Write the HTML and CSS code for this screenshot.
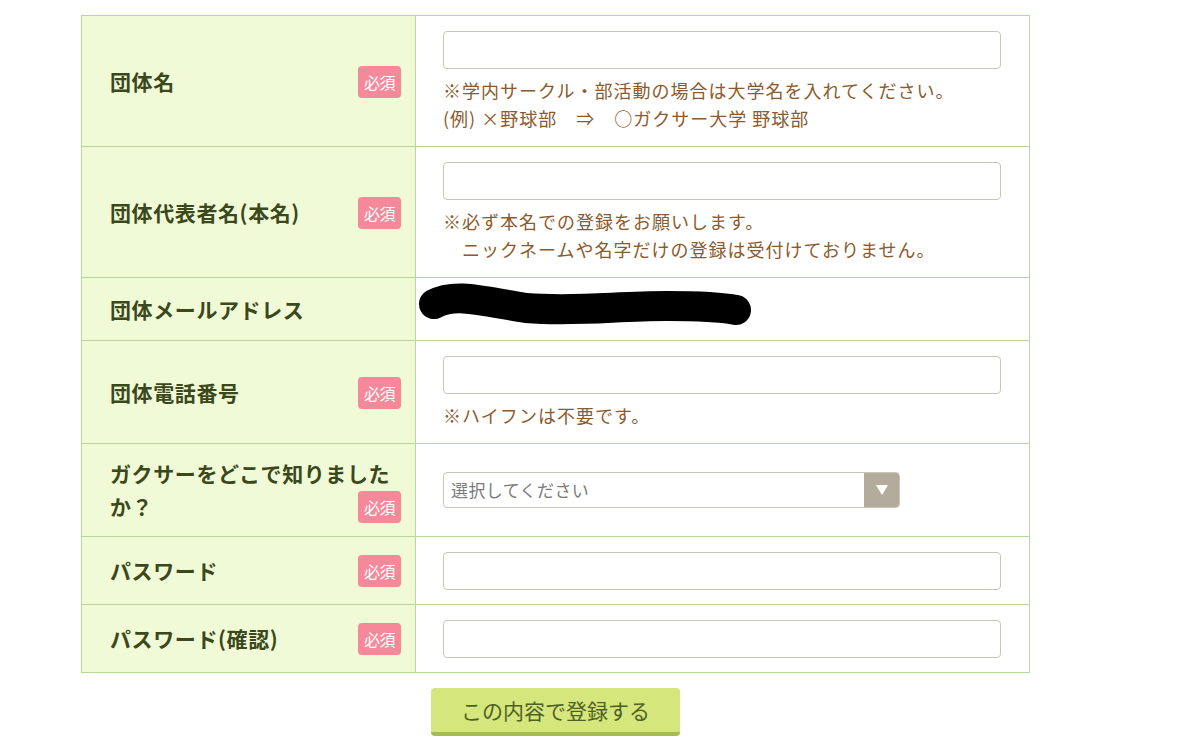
FILE: index.html
```html
<!DOCTYPE html>
<html lang="ja">
<head>
<meta charset="utf-8">
<title>団体登録</title>
<link rel="stylesheet" href="styles.css">
</head>
<body>
<div class="page">
  <table class="form">
    <tr class="r-tall">
      <th><div class="lab">団体名<span class="req">必須</span></div></th>
      <td>
        <input class="field" type="text">
        <p class="note">※学内サークル・部活動の場合は大学名を入れてください。<br>(例) ×野球部　⇒　○ガクサー大学 野球部</p>
      </td>
    </tr>
    <tr class="r-tall">
      <th><div class="lab">団体代表者名(本名)<span class="req">必須</span></div></th>
      <td>
        <input class="field" type="text">
        <p class="note">※必ず本名での登録をお願いします。<br>　ニックネームや名字だけの登録は受付けておりません。</p>
      </td>
    </tr>
    <tr class="r-mail">
      <th><div class="lab">団体メールアドレス</div></th>
      <td class="mail">
        <svg class="blot" width="340" height="62" viewBox="0 0 340 62" aria-hidden="true">
          <path d="M18 26 C 40 14, 70 24, 110 30 C 160 34, 200 28, 250 28 C 290 28, 310 30, 320 32" stroke="#000" stroke-width="30" stroke-linecap="round" fill="none"/>
        </svg>
      </td>
    </tr>
    <tr class="r-tel">
      <th><div class="lab">団体電話番号<span class="req">必須</span></div></th>
      <td>
        <input class="field" type="text">
        <p class="note">※ハイフンは不要です。</p>
      </td>
    </tr>
    <tr class="r-sel">
      <th><div class="lab">ガクサーをどこで知りましたか？<span class="req">必須</span></div></th>
      <td>
        <div class="select"><span class="select-text">選択してください</span><span class="select-arrow"><svg width="14" height="12" viewBox="0 0 14 12"><path d="M1 1 H13 L7 11 Z" fill="#fff"/></svg></span></div>
      </td>
    </tr>
    <tr class="r-pw">
      <th><div class="lab">パスワード<span class="req">必須</span></div></th>
      <td><input class="field" type="password"></td>
    </tr>
    <tr class="r-pw">
      <th><div class="lab">パスワード(確認)<span class="req">必須</span></div></th>
      <td><input class="field" type="password"></td>
    </tr>
  </table>
  <div class="actions">
    <button class="submit" type="button">この内容で登録する</button>
  </div>
</div>
</body>
</html>
```

FILE: styles.css
```css
html, body {
  margin: 0;
  padding: 0;
  background: #ffffff;
}
body {
  font-family: "Noto Sans CJK JP", "Noto Sans", sans-serif;
}
.page {
  padding: 15px 0 0 81px;
  width: 949px;
}
.form {
  width: 949px;
  border-collapse: collapse;
  table-layout: fixed;
}
.form th,
.form td {
  border: 1px solid #b8d79f;
  vertical-align: middle;
}
.form th {
  width: 291px;
  background: #f0fad6;
  padding: 0 14px 0 28px;
  text-align: left;
  font-weight: 700;
}
.form td {
  background: #ffffff;
  padding: 14px 0 14px 27px;
}
.lab {
  display: flow-root;
  font-size: 21px;
  line-height: 33px;
  color: #3b481c;
  letter-spacing: 0.6px;
}
.req {
  float: right;
  width: 43px;
  height: 32px;
  line-height: 32px;
  margin-top: 1px;
  text-align: center;
  background: #f5899a;
  color: #ffffff;
  border-radius: 4px;
  font-size: 16px;
  font-weight: 400;
  letter-spacing: -0.5px;
}
.field {
  display: block;
  box-sizing: border-box;
  width: 558px;
  height: 38px;
  margin: 0;
  border: 1px solid #c9c5b8;
  border-radius: 4px;
  background: #fff;
}
.note {
  margin: 7px 0 0;
  font-size: 18px;
  line-height: 28px;
  color: #8c5a2c;
  letter-spacing: 1px;
}
.r-tall { height: 131px; }
.r-mail { height: 62px; }
.r-tel { height: 103px; }
.r-sel { height: 93px; }
.r-pw { height: 68px; }
.form td.mail {
  padding: 0;
  height: 61px;
}
.blot {
  display: block;
}
.select {
  display: flex;
  box-sizing: border-box;
  width: 457px;
  height: 36px;
  border: 1px solid #c9c5b8;
  border-radius: 4px;
  overflow: hidden;
  background: #fff;
}
.select-text {
  flex: 1;
  padding-left: 7px;
  font-size: 17px;
  line-height: 34px;
  color: #7b7b7b;
  letter-spacing: 0.4px;
}
.select-arrow {
  width: 35px;
  background: #b3ab9b;
  display: flex;
  align-items: center;
  justify-content: center;
}
.actions {
  display: flex;
  justify-content: center;
  padding-top: 15px;
}
.submit {
  width: 249px;
  height: 48px;
  border: none;
  border-bottom: 4px solid #a7bb53;
  border-radius: 4px;
  background: #d5e67c;
  color: #4f6024;
  font-family: "Noto Sans CJK JP", "Noto Sans", sans-serif;
  font-size: 21px;
  padding: 0;
}
```
